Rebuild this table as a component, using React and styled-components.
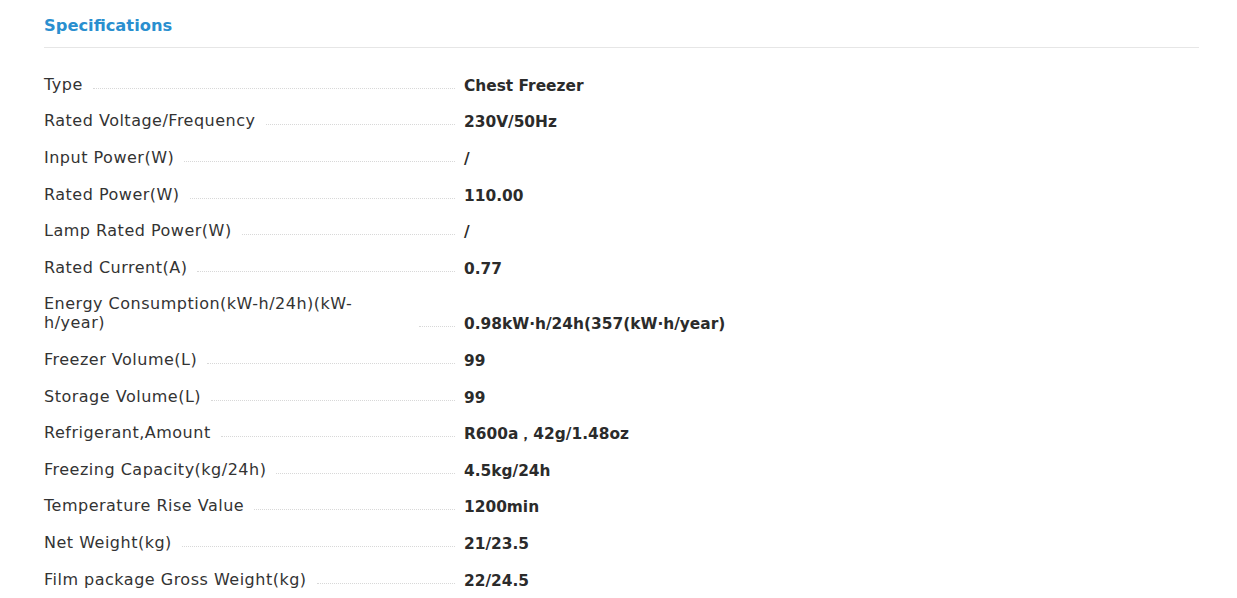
import styled, { createGlobalStyle } from "styled-components";

const specs = [
    { label: "Type", value: "Chest Freezer" },
    { label: "Rated Voltage/Frequency", value: "230V/50Hz" },
    { label: "Input Power(W)", value: "/" },
    { label: "Rated Power(W)", value: "110.00" },
    { label: "Lamp Rated Power(W)", value: "/" },
    { label: "Rated Current(A)", value: "0.77" },
    { label: "Energy Consumption(kW-h/24h)(kW-h/year)", value: "0.98kW·h/24h(357(kW·h/year)" },
    { label: "Freezer Volume(L)", value: "99" },
    { label: "Storage Volume(L)", value: "99" },
    { label: "Refrigerant,Amount", value: "R600a，42g/1.48oz" },
    { label: "Freezing Capacity(kg/24h)", value: "4.5kg/24h" },
    { label: "Temperature Rise Value", value: "1200min" },
    { label: "Net Weight(kg)", value: "21/23.5" },
    { label: "Film package Gross Weight(kg)", value: "22/24.5" },
];

const Specifications = () => {
    return (
        <Section>
            <Title>Specifications</Title>
            <SpecList>
                {
                    specs.map((spec) => (
                        <SpecRow key={spec.label}>
                            <LabelCell>
                                <LabelText>{spec.label}</LabelText>
                                <Dots />
                            </LabelCell>
                            <ValueCell>{spec.value}</ValueCell>
                        </SpecRow>
                    ))
                }
            </SpecList>
        </Section>
    );
}

export default function App() {
    return (
        <>
            <GlobalStyle />
            <Specifications />
        </>
    );
}

const GlobalStyle = createGlobalStyle`
  body {
    margin: 0;
    background: #fff;
    font-family: "DejaVu Sans", sans-serif;
  }
`;

const Section = styled.section`
  width: 1155px;
  padding-left: 44px;
`;

const Title = styled.h2`
  margin: 0;
  padding-top: 16px;
  height: 48px;
  box-sizing: border-box;
  border-bottom: 1px solid #e6e6e6;
  color: #2a8fcf;
  font-size: 16.3px;
  font-weight: bold;
  line-height: 20px;
`;

const SpecList = styled.div`
  padding-top: 18px;
`;

const SpecRow = styled.div`
  display: flex;
  align-items: flex-end;
  padding: 8.8px 0;
`;

const LabelCell = styled.div`
  width: 411px;
  display: flex;
  align-items: flex-end;
`;

const LabelText = styled.span`
  flex: 0 1 auto;
  color: #333;
  font-size: 16px;
  letter-spacing: 0.5px;
  line-height: 19px;
`;

const Dots = styled.span`
  flex: 1;
  min-width: 36px;
  margin: 0 0 5px 10px;
  border-bottom: 1px dotted #d8d8d8;
`;

const ValueCell = styled.div`
  padding-left: 9px;
  color: #2b2b2b;
  font-size: 15.4px;
  font-weight: bold;
  line-height: 15px;
`;
